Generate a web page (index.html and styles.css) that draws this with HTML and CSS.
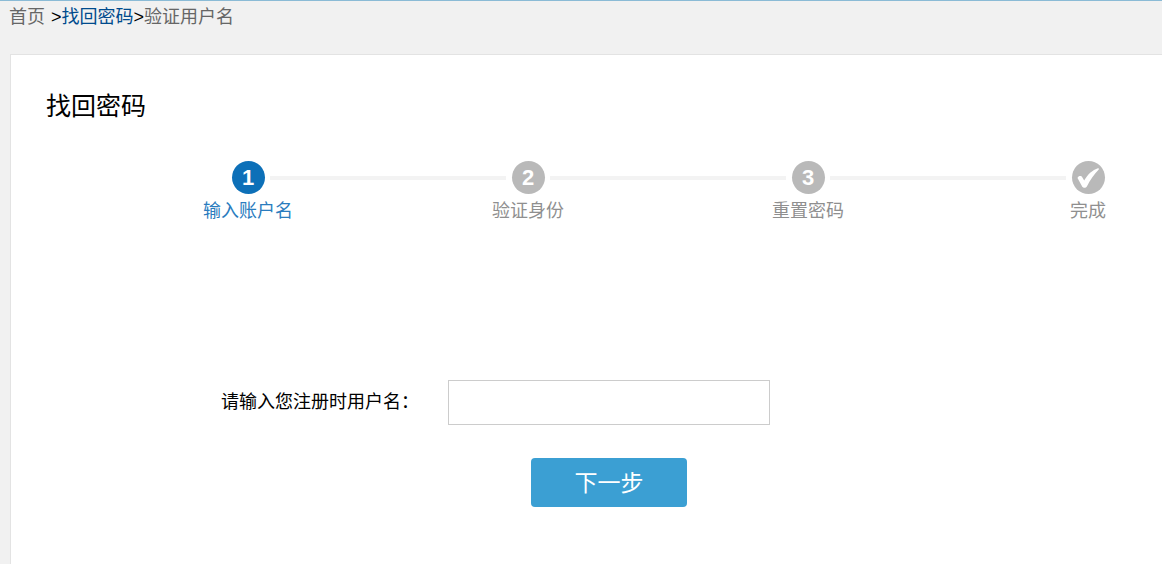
FILE: index.html
```
<!DOCTYPE html>
<html lang="zh-CN">
<head>
    <meta charset="UTF-8">
    <meta name="viewport" content="width=device-width, initial-scale=1.0">
    <title>找回密码</title>
    <link rel="stylesheet" href="styles.css">
</head>
<body>
    <nav class="breadcrumb">
        <a href="#">首页</a>
        <span>&gt;</span><a href="#" class="active">找回密码</a><span>&gt;</span><a href="#">验证用户名</a>
    </nav>

    <main class="panel">
        <h1>找回密码</h1>

        <ol class="steps">
            <li class="step current">
                <span class="num">1</span>
                <span class="name">输入账户名</span>
            </li>
            <li class="line" aria-hidden="true"></li>
            <li class="step">
                <span class="num">2</span>
                <span class="name">验证身份</span>
            </li>
            <li class="line" aria-hidden="true"></li>
            <li class="step">
                <span class="num">3</span>
                <span class="name">重置密码</span>
            </li>
            <li class="line" aria-hidden="true"></li>
            <li class="step">
                <span class="num">
                    <svg width="33" height="33" viewBox="0 0 33 33">
                        <path d="M5.5 17 C6.5 14.6 9.3 14.4 10.4 16.4 L12.2 19.6 C15.5 13.5 20 9.3 26.5 7 L26.8 8.6 C22 13.5 18.3 19 15 25.2 C13.8 27.3 11 27.3 10 25.3 Z" fill="#fff"/>
                    </svg>
                </span>
                <span class="name">完成</span>
            </li>
        </ol>

        <form class="find-form" action="#" method="post">
            <div class="row">
                <label for="username">请输入您注册时用户名：</label>
                <input type="text" id="username" name="username">
            </div>
            <button type="submit">下一步</button>
        </form>
    </main>
</body>
</html>
```
FILE: styles.css
```
* {
    box-sizing: border-box;
}
body {
    margin: 0;
    min-height: 100vh;
    display: flex;
    flex-direction: column;
    border-top: 1px solid #8bbbd6;
    background: #f1f1f1;
    color: #000;
    font-family: "Liberation Sans", "Noto Sans CJK SC", sans-serif;
    font-size: 18px;
}
.breadcrumb {
    display: flex;
    height: 53px;
    padding: 4px 9px;
    line-height: 24px;
}
.breadcrumb a {
    color: #666;
    text-decoration: none;
}
.breadcrumb a:first-child {
    margin-right: 6px;
}
.breadcrumb a.active {
    color: #004b8d;
}
.panel {
    flex: 1;
    margin-left: 10px;
    padding: 33px 29px 57px 35px;
    border: 1px solid #e3e3e3;
    border-width: 1px 0 0 1px;
    background: #fff;
}
h1 {
    margin: 0;
    font-size: 25px;
    font-weight: normal;
    line-height: 36px;
}
.steps {
    display: flex;
    margin: 37px 0 0 157px;
    padding: 0;
    list-style: none;
}
.step {
    display: flex;
    flex-direction: column;
    align-items: center;
    width: 90px;
    color: #8f8f8f;
}
.num {
    width: 33px;
    height: 33px;
    border-radius: 50%;
    background: #b9b9b9;
    color: #fff;
    font-size: 22px;
    font-weight: bold;
    line-height: 33px;
    text-align: center;
}
.num svg {
    display: block;
}
.name {
    margin-top: 4px;
    line-height: 26px;
    white-space: nowrap;
}
.current {
    color: #2a7cbe;
}
.current .num {
    background: #0d70b8;
}
.line {
    flex: 1;
    height: 4px;
    margin: 15px -23px 0;
    background: #f3f3f3;
}
.find-form {
    margin: 156px 0 0 175px;
}
.row {
    display: flex;
}
.row label {
    width: 227px;
    line-height: 45px;
    white-space: nowrap;
}
.row input {
    width: 322px;
    height: 45px;
    padding: 0 10px;
    border: 1px solid #ccc;
    font: inherit;
}
button {
    display: block;
    width: 156px;
    height: 49px;
    margin: 33px 0 0 310px;
    padding: 0 0 4px;
    border: 0;
    border-radius: 4px;
    background: #3b9fd3;
    color: #fff;
    font-family: inherit;
    font-size: 23px;
    cursor: pointer;
}
button:hover {
    background: #338fc0;
}
```
